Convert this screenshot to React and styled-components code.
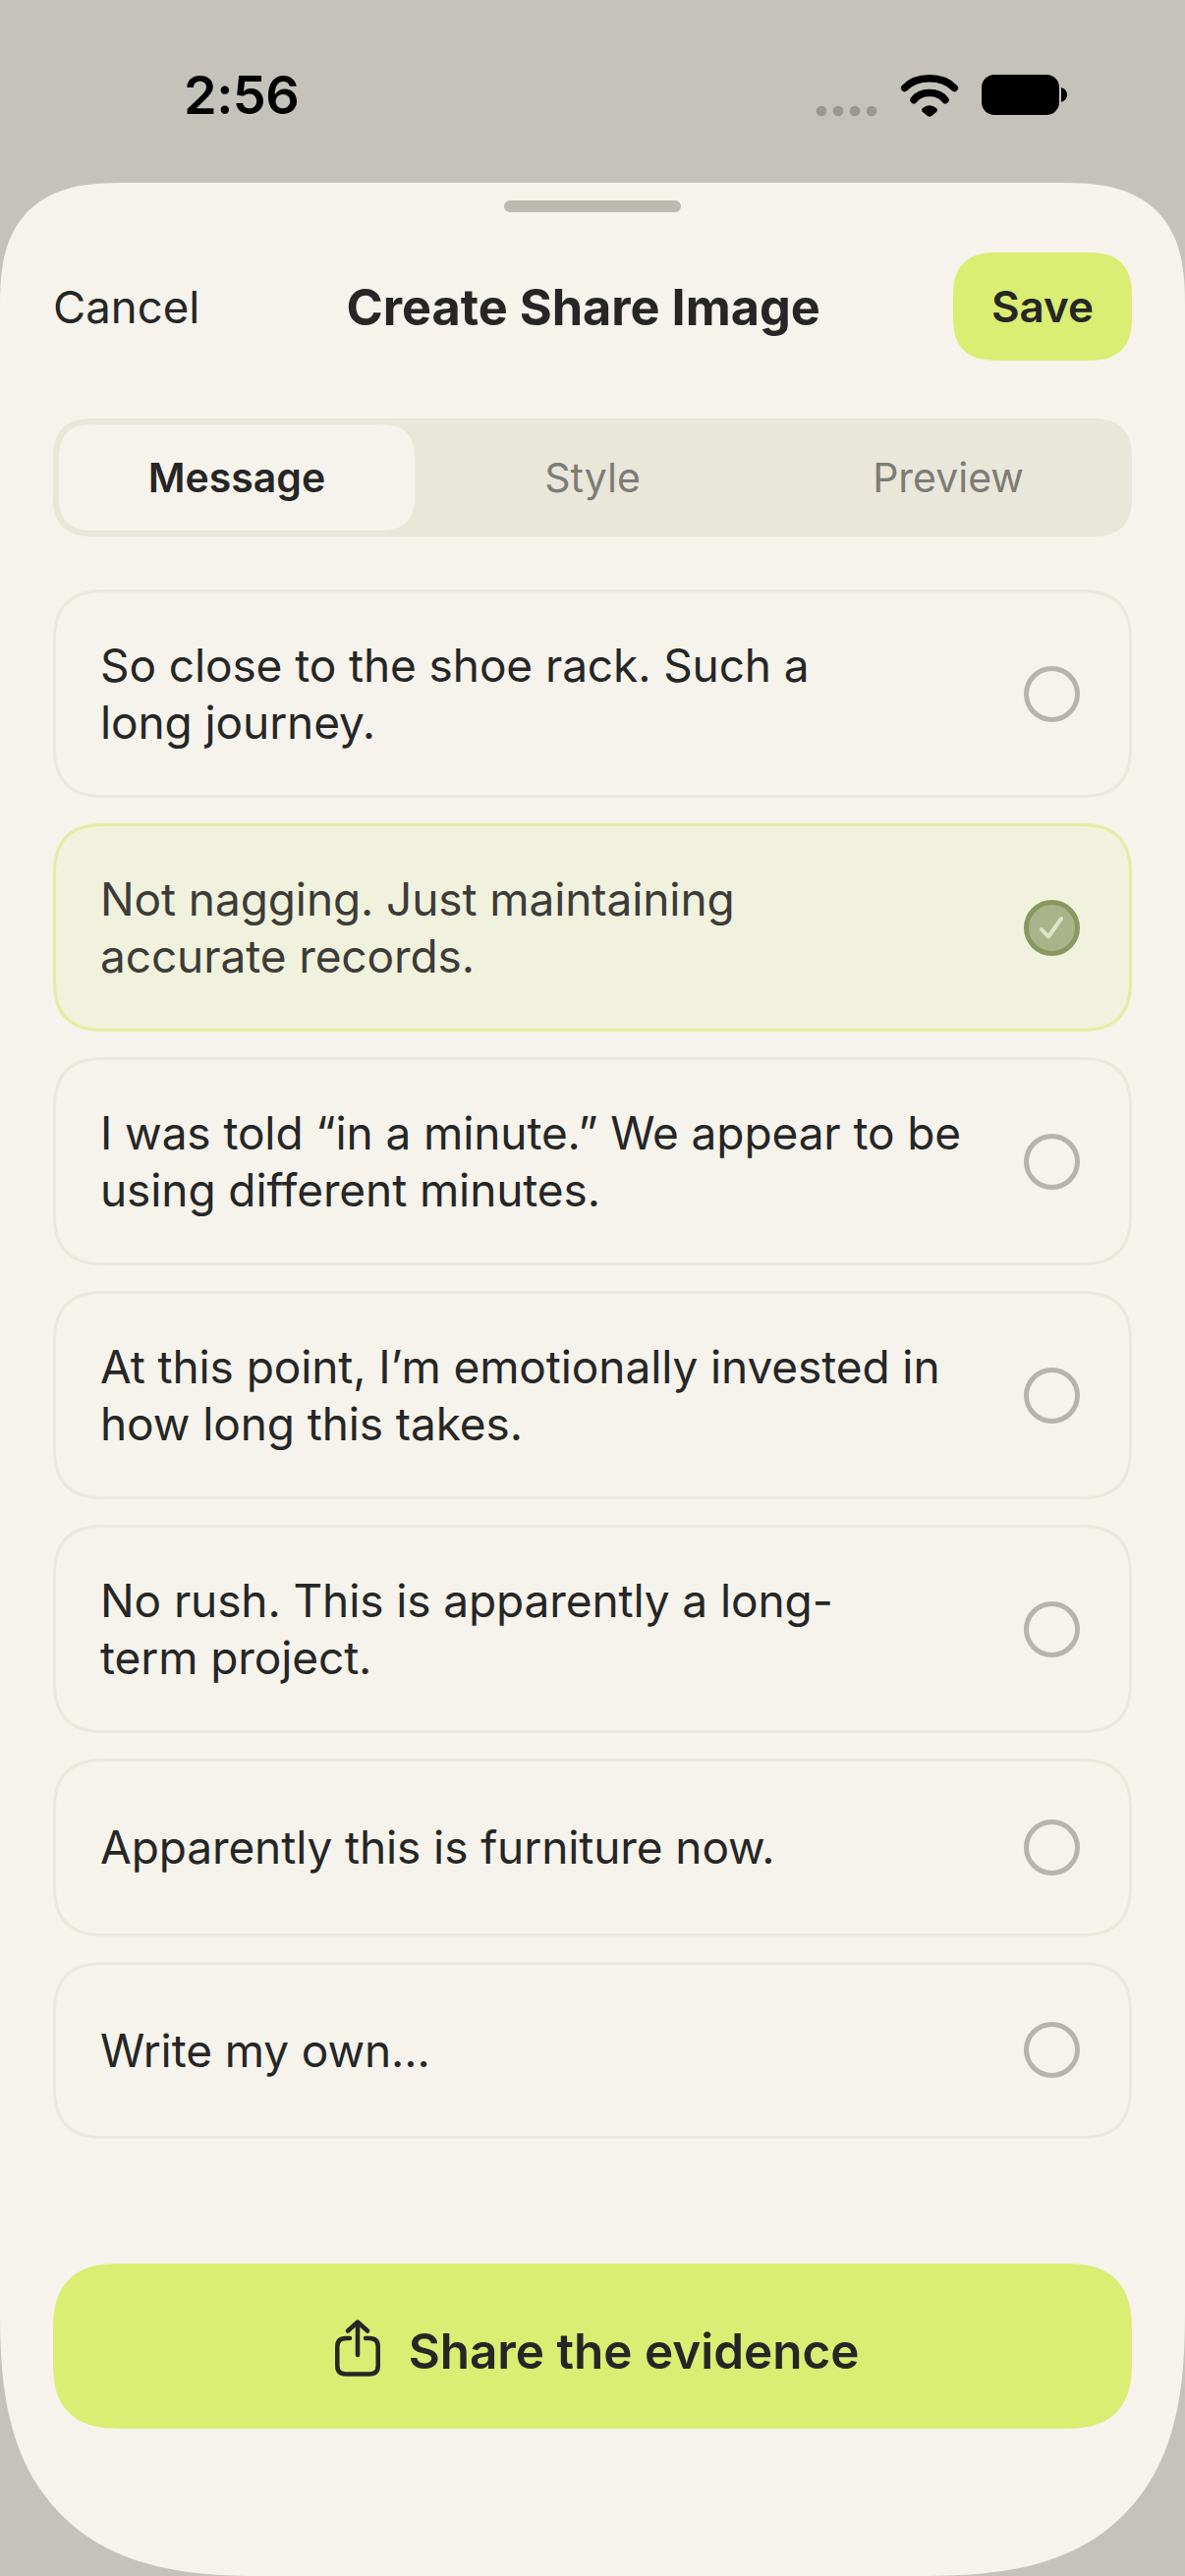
import React from "react";
import styled, { createGlobalStyle } from "styled-components";

const Global = createGlobalStyle`
  html, body { margin: 0; padding: 0; background: #c5c2bb; }
  * { box-sizing: border-box; }
`;
const Page = styled.div`
  width: 1206px; height: 2622px; background: #c5c2bb; overflow: hidden;
  display: flex; flex-direction: column;
  font-family: Inter, "Liberation Sans", sans-serif; color: #262626;
`;
const StatusBar = styled.div`
  height: 186px; flex: none; display: flex; align-items: flex-start; justify-content: space-between;
  padding: 68px 116px 0 187px;
`;
const Time = styled.div`
  font-size: 54px; line-height: 58px; font-weight: 600; color: #000; letter-spacing: -0.5px;
`;
const StatusIcons = styled.svg`
  width: 260px; height: 60px; display: block; margin-top: 6px;
`;
const Sheet = styled.div`
  flex: 1; background: #f5f3eb; display: flex; flex-direction: column;
  padding: 18px 54px 0;
  border-radius: 125px 125px 270px 270px;
  corner-shape: superellipse(1.4);
`;
const Handle = styled.div`
  width: 180px; height: 12px; border-radius: 6px; background: #bdb9b1; align-self: center; flex: none;
`;
const Header = styled.div`
  display: flex; align-items: center; justify-content: space-between;
  margin-top: 41px; height: 110px; flex: none;
`;
const Cancel = styled.div`
  font-size: 45.5px; color: #262626; font-weight: 400;
`;
const Title = styled.div`
  font-size: 50.4px; font-weight: 700; color: #262626; margin-left: 14px;
`;
const Save = styled.div`
  width: 182px; height: 110px; border-radius: 46px; corner-shape: superellipse(1.4); background: #d9ee72;
  display: flex; align-items: center; justify-content: center;
  font-size: 44px; font-weight: 600;
`;
const Segments = styled.div`
  margin-top: 59px; height: 120px; flex: none; background: #e9e6da; border-radius: 42px; corner-shape: superellipse(1.4);
  padding: 6px; display: grid; grid-template-columns: repeat(3, 1fr);
`;
const Segment = styled.div`
  border-radius: 36px; corner-shape: superellipse(1.4); display: flex; align-items: center; justify-content: center;
  font-size: 41px;
  font-weight: ${p => (p.$active ? 600 : 400)};
  color: ${p => (p.$active ? "#262626" : "#7d7c76")};
  background: ${p => (p.$active ? "#f5f3eb" : "transparent")};
`;
const Options = styled.div`
  margin-top: 54px; display: flex; flex-direction: column; gap: 26px;
`;
const Option = styled.div`
  display: flex; align-items: center; justify-content: space-between;
  height: ${p => (p.$single ? 180.5 : 212)}px;
  padding: 0 50px 0 45px;
  border-radius: 54px; corner-shape: superellipse(1.4);
  border: 3px solid ${p => (p.$selected ? "#e4eda3" : "#ebe9dd")};
  background: ${p => (p.$selected ? "#f0f2de" : "transparent")};
`;
const OptionText = styled.div`
  font-size: 46px; line-height: 58px; letter-spacing: -0.1px;
  color: ${p => (p.$selected ? "#3c3c38" : "#262626")};
`;
const Radio = styled.div`
  width: 57px; height: 57px; border-radius: 50%; flex: none;
  display: flex; align-items: center; justify-content: center;
  border: 5px solid ${p => (p.$selected ? "#8a9860" : "#b5b4ae")};
  background: ${p => (p.$selected ? "#a9b48a" : "transparent")};
`;
const Check = styled.svg`
  width: 31px; height: 31px; display: block;
`;
const ShareButton = styled.div`
  margin-top: 127px; height: 168px; flex: none; border-radius: 70px; corner-shape: superellipse(1.4); background: #d9ee72;
  display: flex; align-items: center; justify-content: center; gap: 29px; padding-left: 9px;
  font-size: 49.4px; font-weight: 600; color: #262626;
`;
const ShareIcon = styled.svg`
  width: 46px; height: 58px; display: block; margin-top: 4px;
`;
const ShareLabel = styled.span`
  padding-top: 9px;
`;

const options = [
  { lines: ["So close to the shoe rack. Such a", "long journey."] },
  { lines: ["Not nagging. Just maintaining", "accurate records."], selected: true },
  { lines: ["I was told “in a minute.” We appear to be", "using different minutes."] },
  { lines: ["At this point, I’m emotionally invested in", "how long this takes."] },
  { lines: ["No rush. This is apparently a long-", "term project."] },
  { lines: ["Apparently this is furniture now."] },
  { lines: ["Write my own..."] },
];

export default function App() {
  return (
    <Page>
      <Global />
      <StatusBar>
        <Time>2:56</Time>
        <StatusIcons viewBox="0 0 260 60">
          <g fill="#9a9790">
            <circle cx="6" cy="39" r="5.3" /><circle cx="23" cy="39" r="5.3" />
            <circle cx="40" cy="39" r="5.3" /><circle cx="57" cy="39" r="5.3" />
          </g>
          <path d="M90.7 15.5 C 103 2.5, 129 2.5, 141.3 15.5" fill="none" stroke="#000" strokeWidth="7.5" strokeLinecap="round" />
          <path d="M100 27.7 C 107 18.1, 125 18.1, 132 27.7" fill="none" stroke="#000" strokeWidth="7.5" strokeLinecap="round" />
          <path d="M109 36 Q116 30.5 123 36 Q125 38 123 40 L118 44 Q116 45.5 114 44 L109 40 Q107 38 109 36Z" fill="#000" />
          <rect x="169" y="2" width="79" height="41" rx="13" fill="#000" />
          <path d="M250 15 Q 256 17 256 22.5 Q 256 28 250 30 Z" fill="#000" />
        </StatusIcons>
      </StatusBar>
      <Sheet>
        <Handle />
        <Header>
          <Cancel>Cancel</Cancel>
          <Title>Create Share Image</Title>
          <Save>Save</Save>
        </Header>
        <Segments>
          <Segment $active>Message</Segment>
          <Segment>Style</Segment>
          <Segment>Preview</Segment>
        </Segments>
        <Options>
          {options.map((o, i) => (
            <Option key={i} $selected={o.selected} $single={o.lines.length === 1}>
              <OptionText $selected={o.selected}>
                {o.lines.map((l, j) => (
                  <React.Fragment key={j}>{j > 0 && <br />}{l}</React.Fragment>
                ))}
              </OptionText>
              <Radio $selected={o.selected}>
                {o.selected && (
                  <Check viewBox="0 0 31 31">
                    <path d="M5 17 L12 24.5 L25 6" fill="none" stroke="#dfe3c9" strokeWidth="4" strokeLinecap="round" strokeLinejoin="round" />
                  </Check>
                )}
              </Radio>
            </Option>
          ))}
        </Options>
        <ShareButton>
          <ShareIcon viewBox="0 0 46 58">
            <g fill="none" stroke="#262626" strokeWidth="4.5" strokeLinecap="round" strokeLinejoin="round">
              <path d="M15 19 H11 Q2.3 19 2.3 27.5 V47 Q2.3 55.5 11 55.5 H35 Q43.7 55.5 43.7 47 V27.5 Q43.7 19 35 19 H31" />
              <path d="M23 36 V3" />
              <path d="M13 11.5 L23 2.5 L33 11.5" />
            </g>
          </ShareIcon>
          <ShareLabel>Share the evidence</ShareLabel>
        </ShareButton>
      </Sheet>
    </Page>
  );
}
